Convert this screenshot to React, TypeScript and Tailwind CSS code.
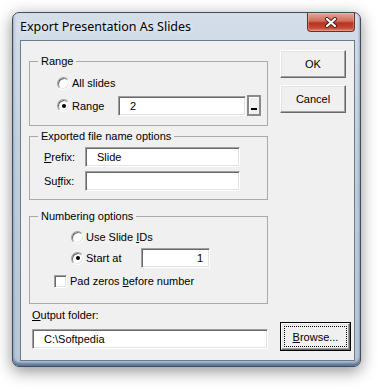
import React from "react";

const ui = "font-['Liberation_Sans',Arial,sans-serif] text-[11px] leading-[14px] text-black";

const sunken =
  "border border-t-[#a0a0a0] border-l-[#a0a0a0] border-r-white border-b-white shadow-[inset_1px_1px_0_#696969,inset_-1px_-1px_0_#e3e3e3]";

const raised =
  "border border-t-white border-l-white border-r-[#696969] border-b-[#696969] shadow-[inset_-1px_-1px_0_#a0a0a0,inset_1px_1px_0_#e3e3e3] bg-[#f0f0f0]";

function Radio({ checked }: { checked?: boolean }) {
  return (
    <span className={`flex h-[13px] w-[13px] shrink-0 items-center justify-center rounded-full bg-white ${sunken}`}>
      {checked && <span className="h-[4px] w-[4px] rounded-full bg-black" />}
    </span>
  );
}

function TextBox({ value, className, right }: { value?: string; className: string; right?: boolean }) {
  return (
    <div className={`flex h-[20px] items-center bg-white ${sunken} ${right ? "justify-end pr-[6px]" : "pl-[11px]"} ${className}`}>
      {value}
    </div>
  );
}

function Group({ title, children, className }: { title: string; children: React.ReactNode; className?: string }) {
  return (
    <fieldset className={`w-[239px] border border-[#a9a9a9] p-0 ${className ?? ""}`}>
      <legend className="ml-[8px] px-[3px] leading-[14px]">{title}</legend>
      {children}
    </fieldset>
  );
}

function CloseButton() {
  return (
    <div className="flex h-[19px] w-[48px] items-center justify-center rounded-b-[4px] border border-t-0 border-[#6e2e24] bg-[linear-gradient(180deg,#e4a89c_0%,#cf6c5a_45%,#b8321f_55%,#c2442f_80%,#e0806a_100%)] shadow-[inset_0_0_0_1px_rgba(255,210,200,0.35)]">
      <svg width="14" height="11" viewBox="0 0 14 11">
        <path d="M3 2 L11 9 M11 2 L3 9" stroke="#4a1d16" strokeWidth="4" strokeLinecap="round" />
        <path d="M3 2 L11 9 M11 2 L3 9" stroke="#ffffff" strokeWidth="2.2" strokeLinecap="round" />
      </svg>
    </div>
  );
}

export default function App() {
  return (
    <div className="h-[389px] w-[382px] bg-white pl-[12px] pt-[12px]">
      <div className="flex h-[355px] w-[349px] flex-col rounded-[7px] border border-[#3f4d5c] bg-[linear-gradient(180deg,#d3dee9_0%,#bfcedd_45%,#b6c6d8_100%)] shadow-[0_4px_16px_rgba(0,0,0,0.45),inset_0_-3px_3px_rgba(30,60,105,0.6)]">
        {/* Title bar */}
        <div className="flex h-[27px] shrink-0 items-start justify-between pl-[7px] pr-[5px]">
          <span className="pt-[7px] font-['Noto_Sans',sans-serif] text-[12.5px] leading-[14px] text-black [text-shadow:0_0_6px_#ffffff]">
            Export Presentation As Slides
          </span>
          <CloseButton />
        </div>

        {/* Client area */}
        <div className={`mb-[5px] ml-[7px] mr-[5px] flex-1 border border-[#6b7b8c] bg-[#f0f0f0] ${ui}`}>
          <div className="flex items-start pl-[8px] pt-[9px]">
            <div className="flex flex-col">
              <Group title="Range" className="mt-[4px] pb-[9px]">
                <div className="mt-[5px] flex h-[20px] items-center pl-[27px]">
                  <Radio />
                  <span className="ml-[2px]">All slides</span>
                </div>
                <div className="mt-[2px] flex h-[21px] items-center pl-[27px]">
                  <Radio checked />
                  <span className="ml-[2px] w-[46px]">Range</span>
                  <TextBox value="2" className="w-[128px]" />
                  <div className="ml-[1px] flex h-[21px] w-[14px] items-end justify-center border-2 border-[#8a8a8a] bg-[#f0f0f0] pb-[4px] shadow-[inset_1px_1px_0_#ffffff]">
                    <span className="h-[2px] w-[6px] bg-black" />
                  </div>
                </div>
              </Group>

              <Group title="Exported file name options" className="mt-[3px] pb-[8px]">
                <div className="mt-[4px] flex h-[20px] items-center pl-[14px]">
                  <span className="w-[41px]">
                    <span className="underline">P</span>refix:
                  </span>
                  <TextBox value="Slide" className="w-[155px]" />
                </div>
                <div className="mt-[4px] flex h-[20px] items-center pl-[14px]">
                  <span className="w-[41px]">
                    Su<span className="underline">f</span>fix:
                  </span>
                  <TextBox className="w-[155px]" />
                </div>
              </Group>

              <Group title="Numbering options" className="mt-[9px] pb-[13px]">
                <div className="mt-[4px] flex h-[20px] items-center pl-[41px]">
                  <Radio />
                  <span className="ml-[2px]">
                    Use Slide <span className="underline">I</span>Ds
                  </span>
                </div>
                <div className="mt-[1px] flex h-[20px] items-center pl-[41px]">
                  <Radio checked />
                  <span className="ml-[2px] w-[55px]">Start at</span>
                  <TextBox value="1" right className="w-[69px]" />
                </div>
                <div className="mt-[4px] flex h-[18px] items-center pl-[24px]">
                  <span className={`h-[13px] w-[13px] shrink-0 bg-white ${sunken}`} />
                  <span className="ml-[3px]">
                    Pad zeros <span className="underline">b</span>efore number
                  </span>
                </div>
              </Group>
            </div>

            <div className="ml-[12px] flex flex-col gap-[7px]">
              <button className={`flex h-[28px] w-[66px] items-center justify-center ${raised}`}>OK</button>
              <button className={`flex h-[28px] w-[66px] items-center justify-center ${raised}`}>Cancel</button>
            </div>
          </div>

          <div className="mt-[4px] pl-[11px]">
            <div className="h-[14px]">
              <span className="underline">O</span>utput folder:
            </div>
            <div className="flex items-start">
              <TextBox value="C:\Softpedia" className="mt-[7px] w-[236px]" />
              <div className="ml-[12px] h-[29px] w-[71px] border border-black">
                <button className={`flex h-full w-full p-[2px] ${raised}`}>
                  <span className="flex flex-1 items-center justify-center border border-dotted border-black">
                    <span>
                      <span className="underline">B</span>rowse...
                    </span>
                  </span>
                </button>
              </div>
            </div>
          </div>
        </div>
      </div>
    </div>
  );
}
